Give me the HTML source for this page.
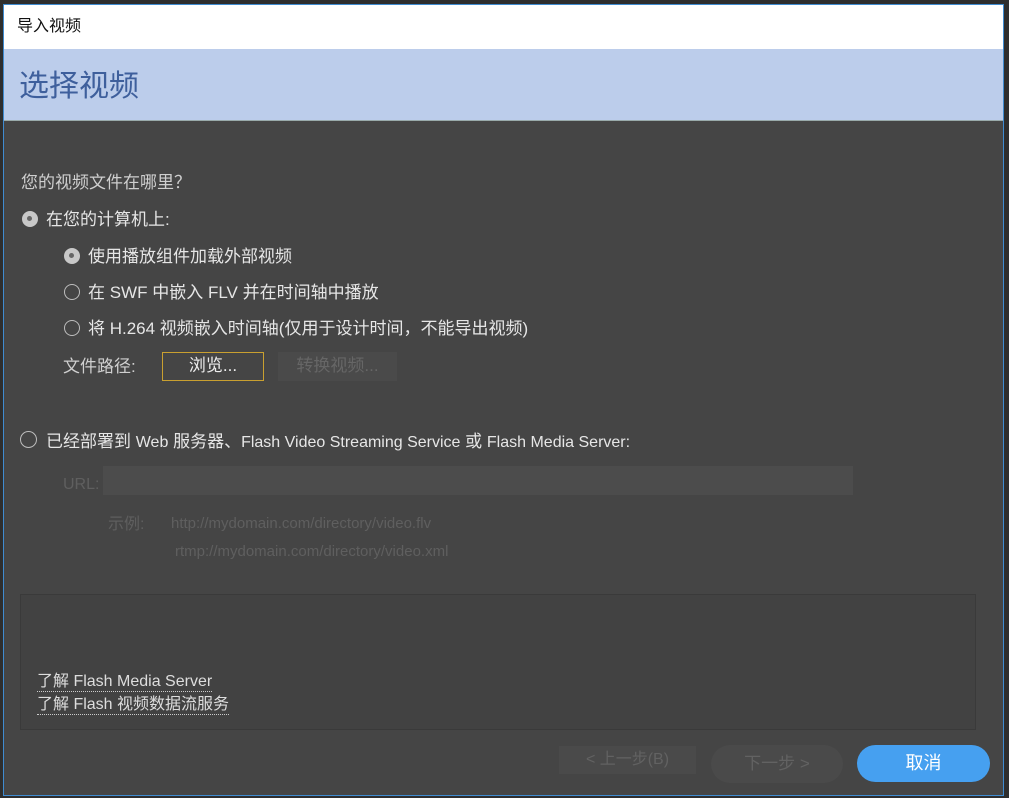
<!DOCTYPE html>
<html><head><meta charset="utf-8"><style>
*{margin:0;padding:0;box-sizing:border-box}
body{width:1009px;height:798px;background:#2e2e2e;position:relative;overflow:hidden;font-family:"Liberation Sans","Noto Sans CJK SC",sans-serif;}
.dlg{position:absolute;left:3px;top:4px;width:1001px;height:792px;background:#454545;border:1px solid #3f8bd0;}
.abs{position:absolute;white-space:nowrap;line-height:1.2}
.radio{position:absolute;width:16px;height:16px;border-radius:50%;border:1.5px solid #bdbdbd;}
.radio.on{background:#c8c8c8;border-color:#c8c8c8}
.radio.on::after{content:"";position:absolute;left:4px;top:4px;width:5px;height:5px;border-radius:50%;background:#666}
.t{color:#e6e6e6;font-size:17px}
.dim{color:#5f5f5f}
</style></head><body>
<div class="dlg">
<div class="abs" style="left:0;top:0;width:999px;height:44px;background:#fff"></div>
<div class="abs" style="left:13px;top:12px;font-size:16px;color:#111">导入视频</div>
<div class="abs" style="left:0;top:44px;width:999px;height:72px;background:#bccdeb;border-bottom:1px solid #9aa"></div>
<div class="abs" style="left:15px;top:64px;font-size:30px;color:#3e5f9c">选择视频</div>

<div class="abs" style="left:17px;top:168px;font-size:17px;color:#cfcfcf">您的视频文件在哪里？</div>
<div class="radio on" style="left:18px;top:206px"></div>
<div class="abs t" style="left:42px;top:205px">在您的计算机上:</div>
<div class="radio on" style="left:60px;top:243px"></div>
<div class="abs t" style="left:84px;top:242px">使用播放组件加载外部视频</div>
<div class="radio" style="left:60px;top:279px"></div>
<div class="abs t" style="left:84px;top:278px">在 SWF 中嵌入 FLV 并在时间轴中播放</div>
<div class="radio" style="left:60px;top:315px"></div>
<div class="abs t" style="left:84px;top:314px">将 H.264 视频嵌入时间轴(仅用于设计时间，不能导出视频)</div>
<div class="abs" style="left:59px;top:352px;font-size:17px;color:#cfcfcf">文件路径:</div>
<div class="abs" style="left:158px;top:347px;width:102px;height:29px;border:1.5px solid #c9a030;color:#eee;font-size:17px;text-align:center;line-height:26px">浏览...</div>
<div class="abs" style="left:274px;top:347px;width:119px;height:29px;background:#4a4a4a;color:#666;font-size:17px;text-align:center;line-height:28px">转换视频...</div>

<div class="radio" style="left:16px;top:426px;width:17px;height:17px"></div>
<div class="abs t" style="left:42px;top:427px">已经部署到 <span style="font-size:16px">Web</span> 服务器、<span style="font-size:16px">Flash Video Streaming Service</span> 或 <span style="font-size:16px">Flash Media Server:</span></div>
<div class="abs dim" style="left:59px;top:470px;font-size:16px">URL:</div>
<div class="abs" style="left:99px;top:461px;width:750px;height:29px;background:#4c4c4c"></div>
<div class="abs dim" style="left:104px;top:510px;font-size:16px">示例:</div>
<div class="abs dim" style="left:167px;top:510px;font-size:15px">http://mydomain.com/directory/video.flv</div>
<div class="abs dim" style="left:171px;top:538px;font-size:15px">rtmp://mydomain.com/directory/video.xml</div>

<div class="abs" style="left:16px;top:589px;width:956px;height:136px;background:#424242;border:1px solid #3a3a3a"></div>
<div class="abs" style="left:33px;top:667px;font-size:16px;color:#ddd;border-bottom:1px dotted #ccc;line-height:19px">了解 Flash Media Server</div>
<div class="abs" style="left:33px;top:690px;font-size:16px;color:#ddd;border-bottom:1px dotted #ccc;line-height:19px">了解 Flash 视频数据流服务</div>

<div class="abs" style="left:555px;top:741px;width:137px;height:28px;background:#4a4a4a;color:#626262;font-size:16px;text-align:center;line-height:28px">&lt; 上一步(B)</div>
<div class="abs" style="left:707px;top:740px;width:132px;height:38px;border-radius:19px;background:#4a4a4a;color:#626262;font-size:17px;text-align:center;line-height:38px">下一步 &gt;</div>
<div class="abs" style="left:853px;top:740px;width:133px;height:37px;border-radius:19px;background:#46a0f0;color:#fff;font-size:18px;text-align:center;line-height:37px">取消</div>
</div>
</body></html>
